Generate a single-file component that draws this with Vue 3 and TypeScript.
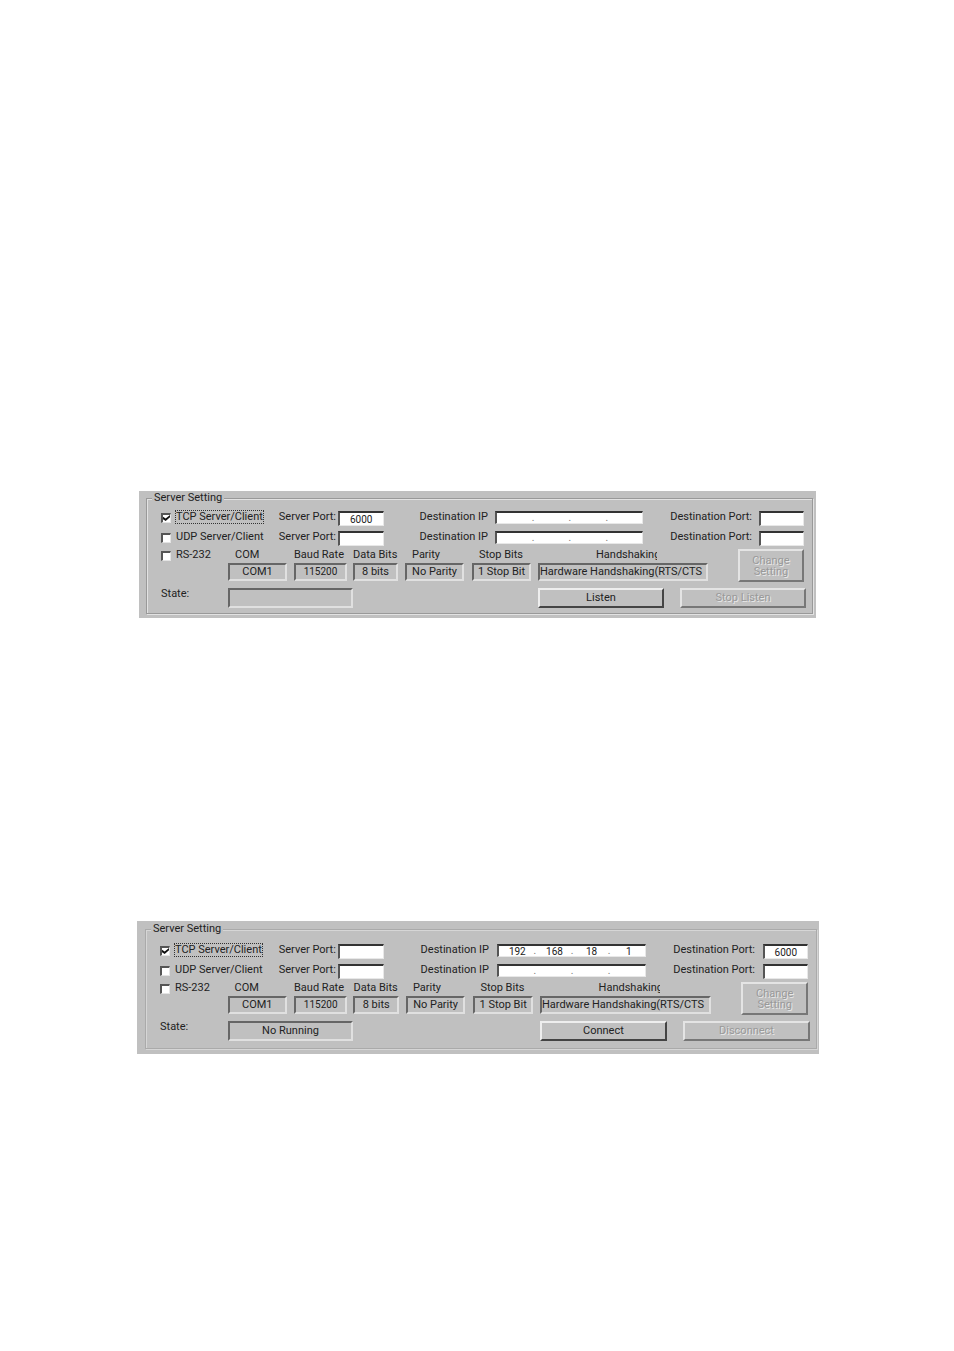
<script setup lang="ts">
import { reactive } from 'vue'

interface Channel {
  name: string
  enabled: boolean
  serverPort: string
  ip: string[]
  destPort: string
}

interface Readout {
  key: string
  label: string
  value: string
}

interface Panel {
  id: string
  channels: Channel[]
  serial: boolean
  state: string
  start: string
  stop: string
}

const readouts: Readout[] = [
  { key: 'com', label: 'COM', value: 'COM1' },
  { key: 'baud', label: 'Baud Rate', value: '115200' },
  { key: 'data', label: 'Data Bits', value: '8 bits' },
  { key: 'parity', label: 'Parity', value: 'No Parity' },
  { key: 'stopbits', label: 'Stop Bits', value: '1 Stop Bit' },
  { key: 'hand', label: 'Handshaking', value: 'Hardware Handshaking(RTS/CTS' },
]

const panels = reactive<Panel[]>([
  {
    id: 'server',
    channels: [
      { name: 'TCP Server/Client', enabled: true, serverPort: '6000', ip: ['', '', '', ''], destPort: '' },
      { name: 'UDP Server/Client', enabled: false, serverPort: '', ip: ['', '', '', ''], destPort: '' },
    ],
    serial: false,
    state: '',
    start: 'Listen',
    stop: 'Stop Listen',
  },
  {
    id: 'client',
    channels: [
      { name: 'TCP Server/Client', enabled: true, serverPort: '', ip: ['192', '168', '18', '1'], destPort: '6000' },
      { name: 'UDP Server/Client', enabled: false, serverPort: '', ip: ['', '', '', ''], destPort: '' },
    ],
    serial: false,
    state: 'No Running',
    start: 'Connect',
    stop: 'Disconnect',
  },
])
</script>

<template>
  <main class="page">
    <section v-for="p in panels" :key="p.id" class="panel" :class="p.id">
      <fieldset class="group">
        <legend>Server Setting</legend>
        <div class="rows">
          <div v-for="(c, i) in p.channels" :key="c.name" class="channel">
            <label class="check">
              <input v-model="c.enabled" type="checkbox" />
              <span :class="{ focused: i === 0 }">{{ c.name }}</span>
            </label>
            <label class="c-sp" :for="`${p.id}-sp-${i}`">Server Port:</label>
            <input :id="`${p.id}-sp-${i}`" v-model="c.serverPort" class="field c-spin" type="text" />
            <label class="c-ip" :for="`${p.id}-ip-${i}-0`">Destination IP</label>
            <div class="ip c-ipin">
              <template v-for="(_, n) in c.ip" :key="n">
                <span v-if="n > 0" class="dot">.</span>
                <input :id="`${p.id}-ip-${i}-${n}`" v-model="c.ip[n]" type="text" :aria-label="`Address part ${n + 1}`" />
              </template>
            </div>
            <label class="c-dp" :for="`${p.id}-dp-${i}`">Destination Port:</label>
            <input :id="`${p.id}-dp-${i}`" v-model="c.destPort" class="field c-dpin" type="text" />
          </div>

          <div class="serial">
            <label class="check">
              <input v-model="p.serial" type="checkbox" />
              <span>RS-232</span>
            </label>
            <div v-for="r in readouts" :key="r.key" class="readout" :class="r.key">
              <label :for="`${p.id}-${r.key}`">{{ r.label }}</label>
              <input :id="`${p.id}-${r.key}`" class="sunken" type="text" :value="r.value" readonly />
            </div>
            <button class="change" type="button" disabled>Change<br />Setting</button>
          </div>

          <div class="status">
            <label :for="`${p.id}-state`">State:</label>
            <input :id="`${p.id}-state`" class="sunken state" type="text" :value="p.state" readonly />
            <button class="start" type="button">{{ p.start }}</button>
            <button class="stop" type="button" disabled>{{ p.stop }}</button>
          </div>
        </div>
      </fieldset>
    </section>
  </main>
</template>

<style>
body {
  background: #fff;
}
</style>

<style scoped>
.page {
  padding: 491px 0 297px;
  font-family: Roboto, "Liberation Sans", sans-serif;
  font-size: 11px;
  line-height: 12px;
  color: #222;
}
.panel {
  box-sizing: border-box;
  background: #c0c0c0;
}
.panel.server {
  --line: #999;
  --glow: #e2e2e2;
  margin: 0 138px 303px 139px;
  padding: 1px 3px 4px 7px;
}
.panel.client {
  --line: #aaa;
  --glow: #d6d6d6;
  margin: 0 135px 0 137px;
  padding: 2px 2px 5px 8px;
}
.group {
  min-width: 0;
  margin: 0;
  padding: 0 6px 5px 5px;
  border: 1px solid var(--line);
  box-shadow: inset 1px 1px var(--glow), 1px 1px var(--glow);
}
legend {
  padding: 0 2px;
  background: #c0c0c0;
}
.rows {
  padding: 7px 0 0 9px;
}
.client .rows {
  padding: 9px 0 2px 9px;
}
label {
  white-space: nowrap;
}
input,
button {
  box-sizing: border-box;
  min-width: 0;
  margin: 0;
  font: inherit;
  color: inherit;
}
.channel {
  display: grid;
  grid-template-columns: 118fr 59fr 46fr 36fr 76fr 148fr 27fr 89fr 45fr 2fr;
  align-items: start;
  height: 20px;
}
.channel > * {
  min-width: 0;
  grid-row: 1;
}
.channel + .channel {
  height: 18px;
}
.c-sp { grid-column: 2; }
.c-spin { grid-column: 3; }
.c-ip { grid-column: 5; }
.c-ipin { grid-column: 6; }
.c-dp { grid-column: 8; }
.c-dpin { grid-column: 9; }

.check {
  display: flex;
  gap: 5px;
}
.check input {
  appearance: none;
  flex: none;
  width: 10px;
  height: 10px;
  margin-top: 2px;
  background: #fff;
  border: 1px solid;
  border-width: 2px 1px 1px 2px;
  border-color: #555 #e4e4e4 #e4e4e4 #555;
}
.check input:checked::before {
  content: "";
  display: block;
  width: 7px;
  height: 6px;
  background: #111;
  clip-path: polygon(0 30%, 38% 60%, 100% 0, 100% 38%, 38% 100%, 0 70%);
}
.focused {
  outline: 1px dotted #333;
}
.field {
  width: 100%;
  height: 15px;
  padding: 0;
  background: #fff;
  border: 1px solid;
  border-width: 2px 1px 1px 2px;
  border-color: #333 #e8e8e8 #e8e8e8 #555;
  font-size: 10px;
  text-align: center;
}
.ip {
  display: flex;
  box-sizing: border-box;
  height: 13px;
  background: #fff;
  border: 1px solid;
  border-width: 2px 1px 1px 2px;
  border-color: #333 #e8e8e8 #e8e8e8 #555;
  font-size: 10px;
  line-height: 10px;
}
.ip input {
  flex: 1 1 0;
  width: 0;
  height: 10px;
  padding: 0 0 0 2px;
  background: none;
  border: 0;
  text-align: center;
}
.dot {
  color: #777;
}
.serial {
  display: grid;
  grid-template-columns: 67fr 59fr 7fr 53fr 6fr 45fr 7fr 59fr 8fr 59fr 7fr 170fr 30fr 66fr 2fr;
  align-items: start;
}
.serial > * {
  grid-row: 1;
}
.serial .check {
  grid-column: 1;
}
.readout {
  display: grid;
  min-width: 0;
  gap: 1px;
}
.readout label {
  height: 13px;
}
.com { grid-column: 2; }
.baud { grid-column: 4; }
.data { grid-column: 6; }
.parity { grid-column: 8; }
.stopbits { grid-column: 10; }
.hand { grid-column: 12; }
.com label,
.parity label,
.stopbits label {
  padding-left: 7px;
}
.hand label {
  width: 61px;
  justify-self: center;
  padding-left: 7px;
  overflow: hidden;
}
.sunken {
  width: 100%;
  height: 18px;
  padding: 0 0 2px;
  background: #c0c0c0;
  border: 2px solid;
  border-color: #666 #e0e0e0 #e0e0e0 #666;
  text-align: center;
}
.baud .sunken {
  font-size: 10px;
}
.hand .sunken {
  text-align: left;
}
button {
  padding: 0;
  background: #c0c0c0;
  border: 2px solid;
  border-color: #eee #444 #444 #eee;
  text-align: center;
}
button:disabled {
  color: #999;
  border-color: #e4e4e4 #777 #777 #e4e4e4;
  text-shadow: 1px 1px #e8e8e8;
}
.change {
  grid-column: 14;
  height: 33px;
  line-height: 11px;
}
.status {
  display: grid;
  grid-template-columns: 67fr 125fr 185fr 126fr 16fr 126fr;
  align-items: start;
  margin-top: 6px;
}
.status .state {
  height: 20px;
}
.start,
.stop {
  height: 20px;
}
.start { grid-column: 4; }
.stop { grid-column: 6; }
</style>
